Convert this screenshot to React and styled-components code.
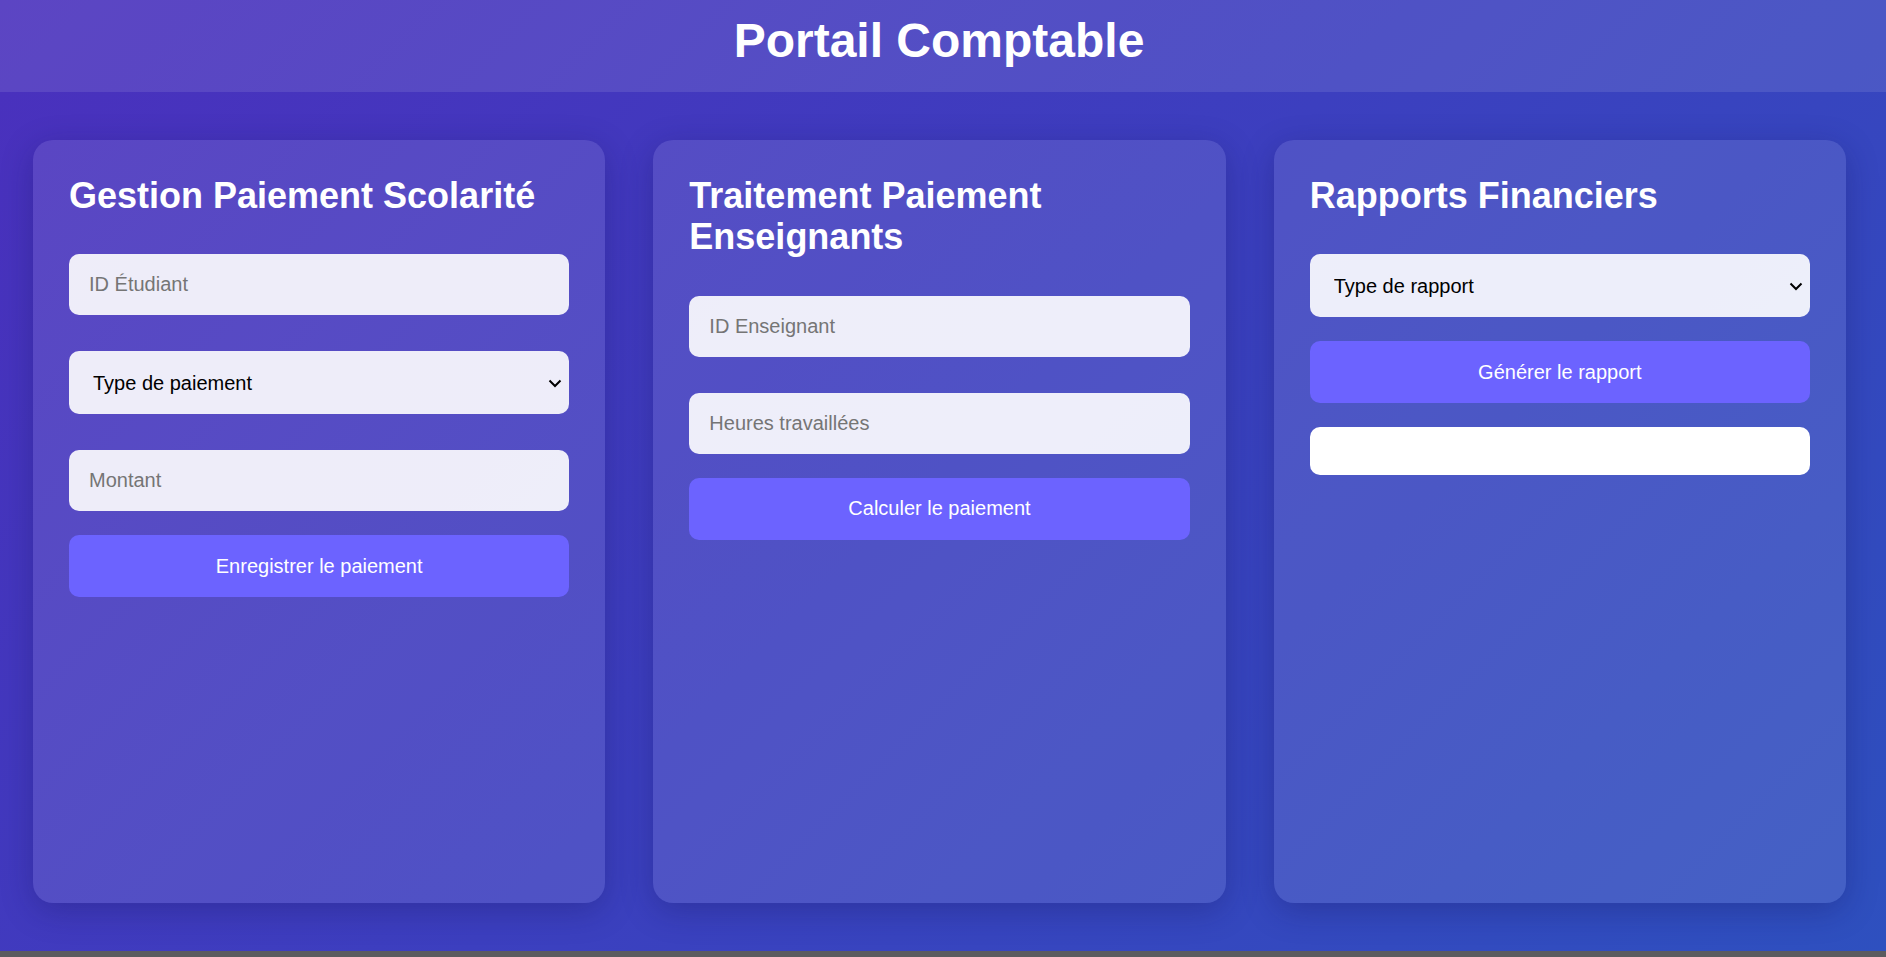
import styled, { createGlobalStyle } from "styled-components"

const GlobalStyle = createGlobalStyle`
  html {
    background: #5b5b5f;
  }
  body {
    margin: 0;
    font-family: "Liberation Sans", Arial, sans-serif;
  }
  * {
    box-sizing: border-box;
  }
`

const Page = styled.div`
  height: 951px;
  display: flex;
  flex-direction: column;
  background: linear-gradient(135deg, #4a30bd 0%, #3c3fbf 50%, #2e50bf 100%);
  color: white;
`

const Header = styled.header`
  height: 92px;
  padding: 13px 8px 0 0;
  background: rgba(255, 255, 255, 0.1);
  text-align: center;
`

const Title = styled.h1`
  margin: 0;
  font-size: 48px;
  font-weight: 700;
`

const Main = styled.main`
  flex: 1;
  display: grid;
  grid-template-columns: repeat(3, 1fr);
  gap: 48px;
  padding: 48px 40px 48px 33px;
`

const Card = styled.section`
  display: flex;
  flex-direction: column;
  gap: 24px;
  padding: 35px 36px;
  background: rgba(255, 255, 255, 0.1);
  border-radius: 20px;
  box-shadow: 0 8px 32px rgba(20, 20, 90, 0.3);
`

const CardTitle = styled.h2`
  margin: 0 0 2px;
  font-size: 36px;
  font-weight: 700;
  line-height: 1.15;
`

const fieldStyle = `
  width: 100%;
  padding: 19px 20px;
  border: none;
  border-radius: 10px;
  background: rgba(255, 255, 255, 0.9);
  font-family: "Liberation Sans", Arial, sans-serif;
  font-size: 20px;
  color: #000;
  outline: none;
`

const Input = styled.input`
  ${fieldStyle}
  margin-top: 12px;
  &::placeholder {
    color: #757575;
  }
`

const SelectWrap = styled.div`
  position: relative;
  margin-top: 12px;
`

const Select = styled.select`
  ${fieldStyle}
  display: block;
  height: 63px;
  padding: 0 44px 0 24px;
  appearance: none;
  cursor: pointer;
`

const Chevron = styled.svg`
  position: absolute;
  right: 7px;
  top: 50%;
  width: 14px;
  height: 9px;
  margin-top: -4px;
  pointer-events: none;
`

const Button = styled.button`
  width: 100%;
  height: 62px;
  border: none;
  border-radius: 10px;
  background: #6c63ff;
  color: white;
  font-family: "Liberation Sans", Arial, sans-serif;
  font-size: 20px;
  cursor: pointer;
`

const Result = styled.div`
  padding: 24px;
  border-radius: 10px;
  background: white;
  color: #333;
`

const Dropdown = ({ label, options }) => (
  <SelectWrap>
    <Select defaultValue="">
      <option value="">{label}</option>
      {options.map((o) => (
        <option key={o} value={o}>{o}</option>
      ))}
    </Select>
    <Chevron viewBox="0 0 14 9">
      <path d="M1.5 1.5 L7 7 L12.5 1.5" fill="none" stroke="#000" strokeWidth="2" />
    </Chevron>
  </SelectWrap>
)

const App = () => {
  return (
    <>
      <GlobalStyle />
      <Page>
        <Header>
          <Title>Portail Comptable</Title>
        </Header>
        <Main>
          <Card>
            <CardTitle>Gestion Paiement Scolarité</CardTitle>
            <Input placeholder="ID Étudiant" />
            <Dropdown label="Type de paiement" options={["Frais d'inscription", "Frais de scolarité"]} />
            <Input placeholder="Montant" />
            <Button>Enregistrer le paiement</Button>
          </Card>
          <Card>
            <CardTitle>Traitement Paiement Enseignants</CardTitle>
            <Input placeholder="ID Enseignant" />
            <Input placeholder="Heures travaillées" />
            <Button>Calculer le paiement</Button>
          </Card>
          <Card>
            <CardTitle>Rapports Financiers</CardTitle>
            <Dropdown label="Type de rapport" options={["Mensuel", "Annuel"]} />
            <Button>Générer le rapport</Button>
            <Result />
          </Card>
        </Main>
      </Page>
    </>
  )
}

export default App
